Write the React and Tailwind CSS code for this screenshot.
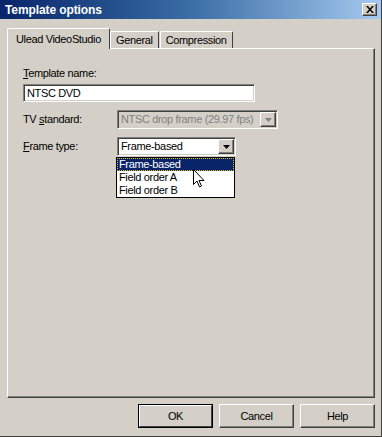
import React from 'react'

const raised = 'border border-t-white border-l-white border-b-[#404040] border-r-[#404040] shadow-[inset_-1px_-1px_0_#808080]'
const sunken = 'border border-t-[#808080] border-l-[#808080] border-b-white border-r-white shadow-[inset_1px_1px_0_#404040,inset_-1px_-1px_0_#d4d0c8]'

function Arrow({ color = '#000' }) {
  return (
    <svg width="7" height="4" viewBox="0 0 7 4">
      <path d="M0 0h7L3.5 4z" fill={color} />
    </svg>
  )
}

function Combo({ value, width, disabled }) {
  return (
    <div className={`${sunken} relative flex items-center h-[19px] ${disabled ? 'bg-[#d4d0c8] text-[#808080]' : 'bg-white text-black'}`} style={{ width }}>
      <span className="pl-[3px] flex-1 overflow-hidden whitespace-nowrap leading-none">{value}</span>
      <div className={`${raised} mr-[1px] w-[16px] h-[15px] shrink-0 bg-[#d4d0c8] flex items-center justify-center`}>
        <Arrow color={disabled ? '#808080' : '#000'} />
      </div>
    </div>
  )
}

function Button({ label, isDefault }) {
  return (
    <div className={`w-[75px] h-[24px] flex items-center justify-center bg-[#d4d0c8] ${isDefault ? 'outline outline-1 outline-black -outline-offset-1 border-2 border-t-white border-l-white border-b-[#404040] border-r-[#404040]' : raised}`}>
      {label}
    </div>
  )
}

export default function App() {
  return (
    <div className="w-[382px] h-[437px] bg-[#d4d0c8] flex flex-col border-r border-b border-r-[#404040] border-b-[#404040] text-[11px] tracking-[-0.35px] text-black overflow-hidden" style={{ fontFamily: '"Liberation Sans", Arial, sans-serif' }}>
      <div className="h-[19px] flex items-center justify-between bg-gradient-to-r from-[#0a246a] via-[#3a6ea5] to-[#a6caf0] pl-[5px] pr-[4px]">
        <span className="text-white font-bold text-[12px] tracking-[-0.1px]">Template options</span>
        <div className={`${raised} w-[15px] h-[13px] bg-[#d4d0c8] flex items-center justify-center`}>
          <svg width="8" height="7" viewBox="0 0 8 7">
            <path d="M0 0h2l2 2.5L6 0h2L5 3.5 8 7H6L4 4.5 2 7H0l3-3.5z" fill="#000" />
          </svg>
        </div>
      </div>

      <div className="flex flex-col pl-[7px] pr-[6px] pt-[8px]">
        <div className="flex items-end h-[21px] relative z-10">
          <div className="h-[21px] -mb-[1px] px-[8px] flex items-center bg-[#d4d0c8] border-t border-l border-t-white border-l-white border-r border-r-[#404040] rounded-t-[2px]">
            Ulead VideoStudio
          </div>
          <div className="h-[17px] px-[5px] flex items-center border-t border-l border-t-white border-l-white border-r border-r-[#404040] rounded-t-[2px]">
            General
          </div>
          <div className="h-[17px] px-[5px] ml-[1px] flex items-center border-t border-l border-t-white border-l-white border-r border-r-[#404040] rounded-t-[2px]">
            Compression
          </div>
        </div>
        <div className="relative h-[350px] border border-t-white border-l-white border-b-[#404040] border-r-[#404040] shadow-[inset_-1px_-1px_0_#808080] pl-[15px] pt-[17px]">
          <div className="leading-[14px]"><u>T</u>emplate name:</div>
          <div className={`${sunken} mt-[4px] w-[232px] h-[18px] bg-white flex items-center pl-[3px]`}>NTSC DVD</div>

          <div className="flex items-center mt-[8px]">
            <span className="w-[94px]">TV <u>s</u>tandard:</span>
            <Combo value="NTSC drop frame (29.97 fps)" width={161} disabled />
          </div>

          <div className="flex items-center mt-[8px]">
            <span className="w-[94px]"><u>F</u>rame type:</span>
            <Combo value="Frame-based" width={119} />
          </div>

          <div className="absolute left-[108px] top-[108px] w-[119px] border border-black bg-white flex flex-col">
            <div className="h-[13px] leading-[13px] pl-[2px] bg-[#0a246a] text-white outline outline-1 outline-dotted outline-[#f0c000] -outline-offset-1">Frame-based</div>
            <div className="h-[13px] leading-[13px] pl-[2px]">Field order A</div>
            <div className="h-[13px] leading-[13px] pl-[2px]">Field order B</div>
          </div>

          <svg className="absolute left-[185px] top-[120px]" width="12" height="19" viewBox="0 0 12 19">
            <path d="M0.5 0.5v15l3.5-3.5 2.5 6 2-1-2.5-5.5h5z" fill="#fff" stroke="#000" strokeWidth="1" />
          </svg>
        </div>

        <div className="flex justify-end gap-[6px] mt-[6px]">
          <Button label="OK" isDefault />
          <Button label="Cancel" />
          <Button label="Help" />
        </div>
      </div>
    </div>
  )
}
